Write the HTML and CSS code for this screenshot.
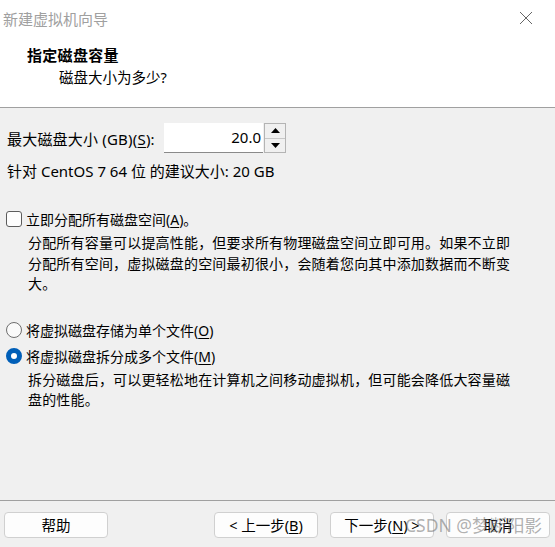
FILE: index.html
```html
<!DOCTYPE html>
<html lang="zh-CN">
<head>
<meta charset="utf-8">
<link rel="stylesheet" href="styles.css">
</head>
<body>
<div class="window">
  <div class="titlebar">
    <span class="title">新建虚拟机向导</span>
    <svg class="close" width="14" height="14" viewBox="0 0 14 14"><path d="M1 1 L13 13 M13 1 L1 13" stroke="#666" stroke-width="1" fill="none"/></svg>
  </div>
  <div class="header">
    <div class="h-title">指定磁盘容量</div>
    <div class="h-sub">磁盘大小为多少?</div>
  </div>
  <div class="body">
    <div class="size-row">
      <span class="label">最大磁盘大小 (GB)(<u>S</u>):</span>
      <div class="input">20.0</div>
      <div class="spinner">
        <div class="spin-btn"><svg width="9" height="5" viewBox="0 0 9 5"><path d="M0 5 L4.5 0 L9 5 Z" fill="#000"/></svg></div>
        <div class="spin-btn"><svg width="9" height="5" viewBox="0 0 9 5"><path d="M0 0 L4.5 5 L9 0 Z" fill="#000"/></svg></div>
      </div>
    </div>
    <div class="recommend">针对 CentOS 7 64 位 的建议大小: 20 GB</div>
    <div class="option opt-check">
      <span class="checkbox"></span>
      <span>立即分配所有磁盘空间(<u>A</u>)。</span>
    </div>
    <div class="desc">分配所有容量可以提高性能，但要求所有物理磁盘空间立即可用。如果不立即分配所有空间，虚拟磁盘的空间最初很小，会随着您向其中添加数据而不断变大。</div>
    <div class="option opt-r1">
      <span class="radio"></span>
      <span>将虚拟磁盘存储为单个文件(<u>O</u>)</span>
    </div>
    <div class="option opt-r2">
      <span class="radio checked"></span>
      <span>将虚拟磁盘拆分成多个文件(<u>M</u>)</span>
    </div>
    <div class="desc desc2">拆分磁盘后，可以更轻松地在计算机之间移动虚拟机，但可能会降低大容量磁盘的性能。</div>
  </div>
  <div class="footer">
    <button class="btn">帮助</button>
    <div class="spacer"></div>
    <button class="btn">&lt; 上一步(<u>B</u>)</button>
    <button class="btn">下一步(<u>N</u>) &gt;</button>
    <button class="btn">取消</button>
    <div class="watermark">CSDN @梦断阳影</div>
  </div>
</div>
</body>
</html>
```
FILE: styles.css
```css
* { box-sizing: border-box; }
html, body { margin: 0; padding: 0; }
body {
  width: 555px;
  height: 547px;
  overflow: hidden;
  font-family: "Noto Sans", "Noto Sans CJK SC", sans-serif;
  font-size: 14px;
  color: #000;
  background: #f0f0f0;
}
.window { width: 555px; height: 547px; display: flex; flex-direction: column; }
.titlebar {
  height: 36px;
  background: #fff;
  display: flex;
  align-items: center;
  justify-content: space-between;
  padding: 0 22px 0 3px;
}
.title { color: #a0a0a0; font-size: 15px; }
.close { display: block; }
.header {
  height: 72px;
  background: #fff;
  border-bottom: 1px solid #a0a0a0;
  padding: 8px 0 0 27px;
}
.h-title { font-weight: bold; line-height: 22px; font-size: 15px; letter-spacing: 0.3px; }
.h-sub { line-height: 22px; padding-left: 32px; font-size: 14.5px; }
.body {
  flex: 1;
  padding: 15px 0 0 7px;
}
.size-row { display: flex; align-items: center; height: 30px; }
.label { width: 157px; font-size: 15px; letter-spacing: 0.2px; }
u { text-decoration: underline; text-underline-offset: 2px; }
.input {
  width: 99px;
  height: 30px;
  background: #fff;
  border-bottom: 1px solid #8a8a8a;
  text-align: right;
  padding-right: 2px;
  line-height: 29px;
  font-size: 15px;
}
.spinner {
  width: 22px;
  height: 30px;
  margin-left: 1px;
  border: 1px solid #b4b4b4;
  display: flex;
  flex-direction: column;
  background: #f0f0f0;
}
.spin-btn {
  flex: 1;
  display: flex;
  align-items: center;
  justify-content: center;
}
.spin-btn + .spin-btn { border-top: 1px solid #c8c8c8; }
.recommend { margin-top: 8px; line-height: 20px; font-size: 15px; }
.option { display: flex; align-items: center; height: 20px; margin-left: -1px; }
.opt-check { margin-top: 28px; }
.opt-r1 { margin-top: 25px; }
.opt-r2 { margin-top: 6px; }
.checkbox {
  width: 16px; height: 16px;
  border: 1px solid #5c5c5c;
  border-radius: 3px;
  background: #fdfdfd;
  margin-right: 4px;
}
.radio {
  width: 16px; height: 16px;
  border: 1px solid #6e6e6e;
  border-radius: 50%;
  background: #fafafa;
  margin-right: 4px;
}
.radio.checked {
  border: 5px solid #005fb8;
  background: #fff;
}
.desc {
  margin: 4px 0 0 21px;
  width: 488px;
  line-height: 20.5px;
  letter-spacing: 0.18px;
}
.desc2 { margin-top: 4px; line-height: 20px; }
.footer {
  height: 47px;
  border-top: 1px solid #a0a0a0;
  display: flex;
  align-items: flex-start;
  padding: 11px 5px 0 4px;
  gap: 12px;
  position: relative;
}
.spacer { flex: 1; }
.btn {
  width: 104px;
  height: 26px;
  background: #fdfdfd;
  border: 1px solid #d0d0d0;
  border-radius: 4px;
  font: inherit;
  font-size: 14.5px;
  color: #000;
  padding: 0;
  line-height: 24px;
}
.watermark {
  position: absolute;
  left: 405px;
  top: 11px;
  font-size: 17.5px;
  color: rgba(110, 110, 110, 0.55);
  pointer-events: none;
  white-space: nowrap;
}
```
